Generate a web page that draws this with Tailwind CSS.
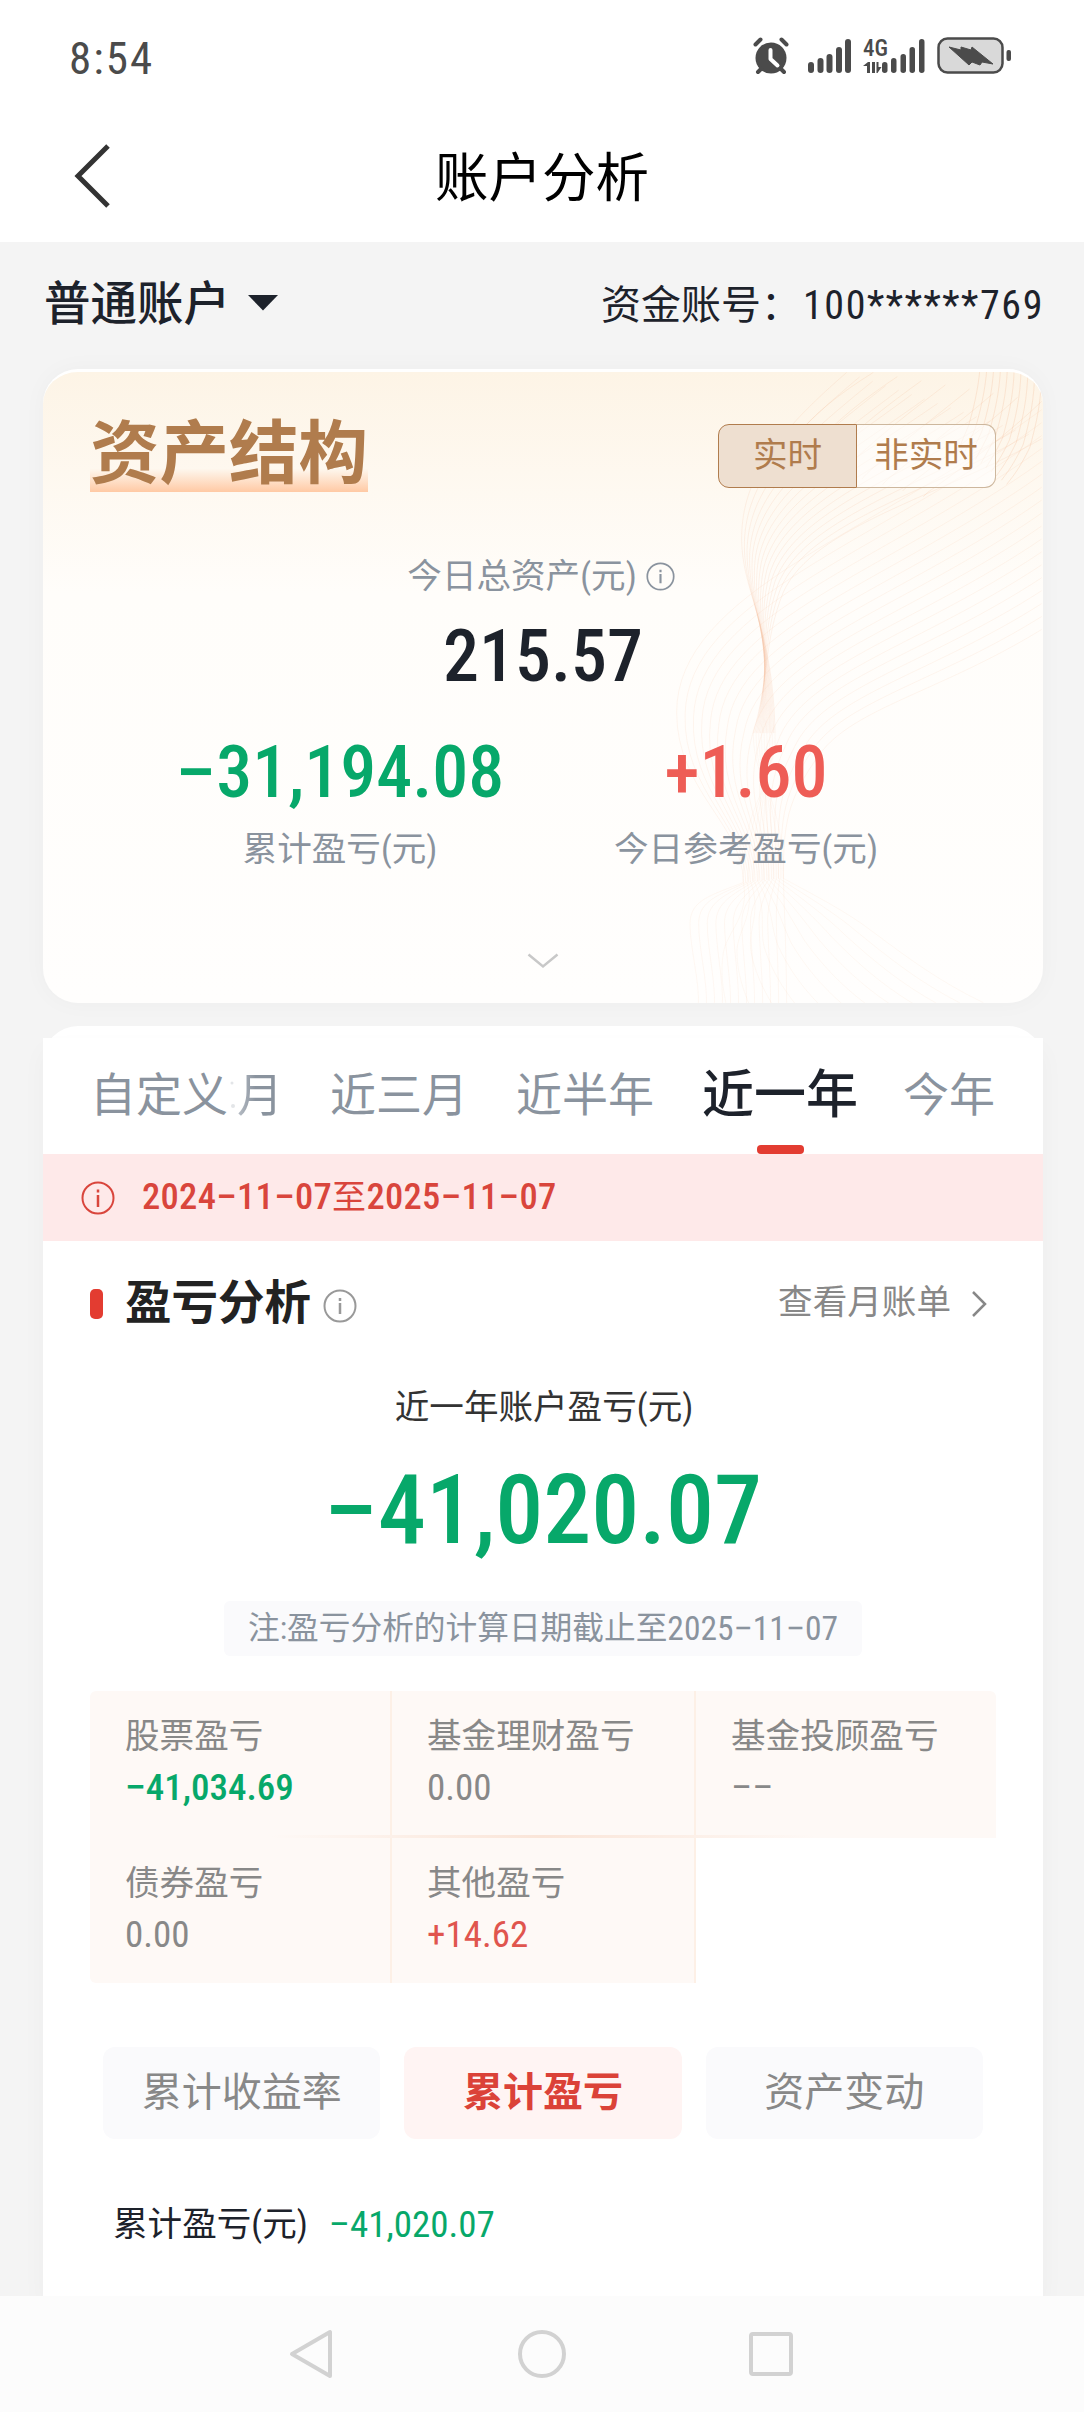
<!DOCTYPE html>
<html lang="zh-CN">
<head>
  <meta charset="UTF-8">
  <meta name="viewport" content="width=device-width, initial-scale=1.0">
  <title>账户分析</title>
  <script src="https://cdn.jsdelivr.net/npm/@tailwindcss/browser@4"></script>
</head>
<body class="w-[1084px] h-[2412px] overflow-hidden bg-[#f4f4f4] font-['Roboto_Condensed','Noto_Sans_CJK_SC',sans-serif] leading-none text-[#1d222b] whitespace-nowrap">
  <!-- status bar -->
  <div class="h-[112px] bg-white flex items-center justify-between pl-[69px] pr-[73px] text-[#4b4b4b]">
    <span class="text-[45px] tracking-[2px] pt-[4px]">8:54</span>
    <svg class="w-[258px] h-[40px]" viewBox="0 0 258 40" fill="#4b4b4b">
      <circle cx="18" cy="22" r="15.5"/>
      <path d="M2.500 8.500 7.500 3.500M33.500 8.500 28.500 3.500M5 36l4-4M31 36l-4-4" stroke="#4b4b4b" stroke-width="4" stroke-linecap="round"/>
      <path d="M17.500 14v9l7 6.500" stroke="#fff" stroke-width="4" fill="none" stroke-linecap="round" stroke-linejoin="round"/>
      <rect x="55" y="26" width="6" height="11" rx="3"/>
      <rect x="64.500" y="22" width="6" height="15" rx="3"/>
      <rect x="73.500" y="18" width="6" height="19" rx="3"/>
      <rect x="83" y="11" width="6" height="26" rx="3"/>
      <rect x="92" y="3" width="6" height="34" rx="3"/>
      <text x="110" y="19.500" font-size="23" font-weight="500" textLength="25" lengthAdjust="spacingAndGlyphs">4G</text>
      <path d="M110 30l5-4h2v11h-3v-7zM119 26h3v11h-3zM123.500 26h2v5h3l-4 6h-1z"/>
      <rect x="129" y="26" width="5.500" height="11" rx="2.700"/>
      <rect x="138" y="22" width="5.500" height="15" rx="2.700"/>
      <rect x="147.500" y="18" width="5.500" height="19" rx="2.700"/>
      <rect x="156.500" y="11" width="5.500" height="26" rx="2.700"/>
      <rect x="166" y="3" width="5.500" height="34" rx="2.700"/>
      <rect x="185.500" y="2.500" width="64" height="34" rx="9" fill="#d9d9d9" stroke="#4b4b4b" stroke-width="2.500"/>
      <path d="M196 11l12 3 0-3 10 3 1-3 21 17-11-2-2 3-8-3-3 3z" stroke="#4b4b4b" stroke-linejoin="round"/>
      <rect x="253.500" y="14" width="4.500" height="11" rx="2"/>
    </svg>
  </div>
  <!-- title bar -->
  <div class="h-[130px] bg-white grid grid-cols-3 items-center text-black">
    <svg class="ml-[71px] w-[44px] h-[66px]" viewBox="0 0 44 66" fill="none" stroke="#333" stroke-width="5"><path d="M37 2 7 32l30 30"/></svg>
    <h1 class="text-[53.5px] text-center pt-1">账户分析</h1>
  </div>
  <!-- account -->
  <div class="h-[127px] flex items-center justify-between pl-[44px] pr-[40px] pb-[5px]">
    <div class="flex items-center">
      <span class="text-[46.5px] font-medium pt-[2px]">普通账户</span>
      <svg class="ml-[17px] w-8 h-4" viewBox="0 0 32 16" fill="#1d222b"><path d="M1 0h30L16 15.500z"/></svg>
    </div>
    <div class="flex items-center text-[40px] pt-[6px]">
      <span>资金账号：</span>
      <span class="ml-[2px] tracking-[1.6px]">100******769</span>
    </div>
  </div>

  <!-- asset card -->
  <div class="relative ml-[43px] w-[1000px] h-[634px] rounded-[35px] overflow-hidden bg-linear-to-b from-[#fdf4e6] via-[#fffdfa] via-35% to-[#fffefd] border-t-3 border-white shadow-[0_0_24px_rgba(0,0,0,0.03)]">
    <svg class="absolute left-0 -top-[3px] w-[1000px] h-[634px]" viewBox="0 0 1000 634" fill="none" stroke="#f4b78f">
      <g id="waves" transform="translate(597 -9) scale(.3333 .4146)"></g>
    </svg>
    <div class="relative">
      <div class="flex items-start justify-between pt-[42px] pl-[47px] pr-[47px]">
        <h2 class="h-[78px] pt-[6px] text-[69.5px] font-bold text-[#b07c4d] bg-linear-to-t from-[#ffc9a4] to-transparent to-30%">资产结构</h2>
        <div class="mt-[10px] flex h-[64px] w-[278px] text-[34.6px] text-[#b07c4d]">
          <div class="w-[139px] flex items-center justify-center pb-[2px] bg-[#eedfd0] border border-[#b07c4d] rounded-l-[11px]">实时</div>
          <div class="w-[139px] flex items-center justify-center pb-[2px] bg-white/60 border border-l-0 border-[#cdb79d] rounded-r-[11px]">非实时</div>
        </div>
      </div>
      <div class="mt-[62px] h-[44px] flex items-center justify-center gap-[9px] pr-1 text-[34.6px] text-[#8a939e]">
        今日总资产(元)
        <svg class="w-[29px] h-[29px]" viewBox="0 0 34 34" fill="none" stroke="currentColor" stroke-width="2"><circle cx="17" cy="17" r="15.500"/><path d="M17 14v11M17 9v3" stroke-width="2.500"/></svg>
      </div>
      <div class="h-[114px] pt-1 flex items-center justify-center text-[72px] font-medium">215.57</div>
      <div class="w-[812px] mx-auto grid grid-cols-2 text-center text-[34.6px] text-[#8a939e]">
        <div class="h-[118px] pt-1 flex items-center justify-center text-[72px] font-medium text-[#07a86a]"><span class="font-['Roboto']">−</span>31,194.08</div>
        <div class="h-[118px] pt-1 flex items-center justify-center text-[72px] font-medium text-[#ee5d56]">+1.60</div>
        <div class="h-[40px] pt-[2px]">累计盈亏(元)</div>
        <div class="h-[40px] pt-[2px]">今日参考盈亏(元)</div>
      </div>
      <svg class="mx-auto mt-[83px] w-8 h-4" viewBox="0 0 32 16" fill="none" stroke="#c8c8c8" stroke-width="2.500"><path d="M1.500 1.500 16 13.500 30.500 1.500"/></svg>
    </div>
  </div>

  <!-- profit card -->
  <div class="ml-[43px] w-[1000px] mt-[23px] h-[12px] overflow-hidden">
    <div class="h-[60px] rounded-t-[35px] bg-white"></div>
  </div>
  <div class="ml-[43px] w-[1000px] h-[1258px] bg-white shadow-[0_12px_24px_rgba(0,0,0,0.03)]">
    <div class="h-[116px] flex items-center pl-[47px] gap-12 text-[46px] text-[#8a939e]">
      <div class="flex items-center pb-[3px]">自定义<svg class="w-[7px] h-[46px]" viewBox="0 0 7 46" fill="#e3e5e8"><circle cx="4" cy="11" r="1.500"/><circle cx="5" cy="34" r="2"/></svg><span class="ml-[2px] bg-linear-to-r from-[#b9bfc7] to-[#8a939e] to-40% bg-clip-text text-transparent">月</span></div>
      <div class="-ml-px pb-[3px]">近三月</div>
      <div class="pb-[3px]">近半年</div>
      <div class="relative h-full flex items-center text-[52px] font-medium text-[#1d222b]"><span class="pb-[1px]">近一年</span>
        <div class="absolute bottom-0 left-[55px] w-[47px] h-[9px] rounded-[4px] bg-[#e33c31]"></div>
      </div>
      <div class="-ml-[3px] pb-[3px]">今年</div>
    </div>
    <div class="h-[87px] flex items-center pl-[38px] bg-[#fee9e9] text-[#d9453c]">
      <svg class="w-[34px] h-[34px]" viewBox="0 0 34 34" fill="none" stroke="currentColor" stroke-width="2"><circle cx="17" cy="17" r="15.500"/><path d="M17 14v12M17 8.500v3" stroke-width="2.500"/></svg>
      <span class="ml-[27px] pb-[1px] text-[36.5px] font-medium tracking-[.3px]">2024<span class="font-['Roboto']">−</span>11<span class="font-['Roboto']">−</span>07<span class="text-[34px] font-normal">至</span>2025<span class="font-['Roboto']">−</span>11<span class="font-['Roboto']">−</span>07</span>
    </div>
    <div class="h-[122px] flex items-center justify-between pl-[47px] pr-[56px]">
      <div class="flex items-center">
        <div class="w-[13px] h-[30px] mt-1 rounded-[5px] bg-[#e33c31]"></div>
        <h3 class="ml-[22px] pt-[2px] text-[46.5px] font-bold text-[#222]">盈亏分析</h3>
        <svg class="ml-[12px] mt-2 w-[34px] h-[34px] text-[#999]" viewBox="0 0 34 34" fill="none" stroke="currentColor" stroke-width="2"><circle cx="17" cy="17" r="15.500"/><path d="M17 14v11M17 9v3" stroke-width="2.500"/></svg>
      </div>
      <div class="flex items-center text-[34.6px] text-[#888]">
        查看月账单
        <svg class="ml-[20px] mt-1 w-4 h-[26px]" viewBox="0 0 16 26" fill="none" stroke="#888" stroke-width="2.500"><path d="M2 1l12 12L2 25"/></svg>
      </div>
    </div>
    <div class="h-[86px] pt-[2px] pl-[2px] flex items-center justify-center text-[34.6px] text-[#333]">近一年账户盈亏(元)</div>
    <div class="h-[120px] pt-[2px] flex items-center justify-center text-[96px] font-medium text-[#07a86a]"><span class="font-['Roboto']">−</span>41,020.07</div>
    <div class="mt-[32px] mx-auto w-[638px] h-[55px] flex items-center justify-center rounded-md bg-[#fafafc] text-[31.7px] text-[#8a939e]">注:盈亏分析的计算日期截止至<span class="text-[33.5px]">2025<span class="font-['Roboto']">−</span>11<span class="font-['Roboto']">−</span>07</span></div>
    <div class="mt-[35px] ml-[47px] w-[906px] text-[34.6px] text-[#888]">
      <div class="grid grid-cols-[302px_304px_300px] h-[144px] bg-[#fef9f6] rounded-t-md">
        <div class="pt-[28px] pl-[35px] border-r-2 border-[#fdf0e6]">
          <div>股票盈亏</div>
          <div class="mt-[15px] text-[37px] font-medium text-[#07a86a]"><span class="font-['Roboto']">−</span>41,034.69</div>
        </div>
        <div class="pt-[28px] pl-[35px] border-r-2 border-[#fdf0e6]">
          <div>基金理财盈亏</div>
          <div class="mt-[15px] text-[37px]">0.00</div>
        </div>
        <div class="pt-[28px] pl-[35px]">
          <div>基金投顾盈亏</div>
          <div class="mt-[15px] text-[37px] font-['Roboto']">−−</div>
        </div>
      </div>
      <div class="h-[3px] bg-linear-to-r from-[#fef9f6] from-20% via-[#fae5d8] to-[#fef9f6] to-80%"></div>
      <div class="grid grid-cols-[302px_304px] w-[606px] h-[145px] bg-[#fef9f6] rounded-bl-md">
        <div class="pt-[28px] pl-[35px] border-r-2 border-[#fdf0e6]">
          <div>债券盈亏</div>
          <div class="mt-[15px] text-[37px]">0.00</div>
        </div>
        <div class="pt-[28px] pl-[35px] border-r-2 border-[#fdf0e6]">
          <div>其他盈亏</div>
          <div class="mt-[15px] text-[37px] text-[#e0554e]">+14.62</div>
        </div>
      </div>
    </div>
    <div class="mt-[64px] mx-[60px] grid grid-cols-3 gap-[24px] h-[92px] text-[40px] text-[#888]">
      <div class="flex items-center justify-center rounded-xl bg-[#fafafc]">累计收益率</div>
      <div class="flex items-center justify-center rounded-xl bg-[#fff4f3] font-bold text-[#db4238]">累计盈亏</div>
      <div class="flex items-center justify-center rounded-xl bg-[#fafafc]">资产变动</div>
    </div>
    <div class="h-[157px] pt-[14px] pl-[70px] flex items-center text-[34.6px]">
      累计盈亏(元)
      <span class="ml-[21px] text-[37px] text-[#07a86a]"><span class="font-['Roboto']">−</span>41,020.07</span>
    </div>
  </div>

  <!-- system navigation -->
  <div class="relative h-[116px] bg-[#fcfcfc] flex items-center justify-center gap-[179px]">
    <svg class="w-[50px] h-[50px]" viewBox="0 0 50 50" fill="none" stroke="#d2d2d2" stroke-width="4" stroke-linejoin="round"><path d="M42 3v44L4 25z"/></svg>
    <svg class="w-[50px] h-[50px]" viewBox="0 0 50 50" fill="none" stroke="#d2d2d2" stroke-width="4"><circle cx="25" cy="25" r="22"/></svg>
    <svg class="w-[50px] h-[50px]" viewBox="0 0 50 50" fill="none" stroke="#d2d2d2" stroke-width="4"><rect x="5" y="5" width="40" height="40" rx="2"/></svg>
  </div>

  <script>
    // each ribbon is blended line by line from its first edge to its last edge
    const ribbons = [
      { n: 16, o: 0.16, a: [620,30, 420,170, 305,280, 305,430, 305,560, 400,640, 405,900], b: [1205,190, 900,330, 520,400, 430,560, 370,680, 390,760, 340,900] },
      { n: 18, o: 0.13, a: [1205,120, 700,420, 110,560, 110,850, 110,1040, 310,1120, 310,1260], b: [1205,650, 900,800, 640,840, 540,950, 440,1060, 430,1120, 430,1250] },
      { n: 9, o: 0.08, a: [405,900, 410,960, 380,1000, 360,1050, 320,1120, 310,1180, 310,1260], b: [340,900, 340,960, 360,1000, 390,1050, 420,1120, 430,1180, 430,1250] },
      { n: 12, o: 0.1, a: [310,1260, 220,1290, 150,1300, 150,1360, 150,1420, 180,1500, 175,1560], b: [430,1250, 432,1290, 433,1330, 435,1360, 437,1420, 440,1500, 440,1560] },
      { n: 12, o: 0.09, a: [310,1260, 330,1340, 260,1380, 250,1430, 240,1480, 250,1520, 260,1560], b: [430,1250, 520,1290, 620,1330, 700,1380, 800,1440, 900,1500, 1030,1550] },
      { n: 10, o: 0.26, a: [1020,20, 1015,70, 1000,120, 985,160, 975,180, 965,195, 960,210], b: [1205,20, 1205,100, 1190,150, 1170,210, 1140,260, 1120,280, 1100,300] },
      { n: 8, o: 0.2, a: [700,30, 600,80, 520,130, 450,200, 440,210, 430,220, 420,230], b: [1205,100, 1100,180, 1000,240, 880,310, 870,315, 860,320, 850,330] }
    ];
    let html = '';
    for (const r of ribbons) {
      for (let i = 0; i < r.n; i++) {
        const t = i / (r.n - 1);
        const p = r.a.map((v, k) => (v + (r.b[k] - v) * t).toFixed(1));
        html += `<path vector-effect="non-scaling-stroke" stroke-opacity="${r.o}" d="M${p.slice(0, 2)} C${p.slice(2)}"/>`;
      }
    }
    document.getElementById('waves').innerHTML = html;
  </script>
</body>
</html>
